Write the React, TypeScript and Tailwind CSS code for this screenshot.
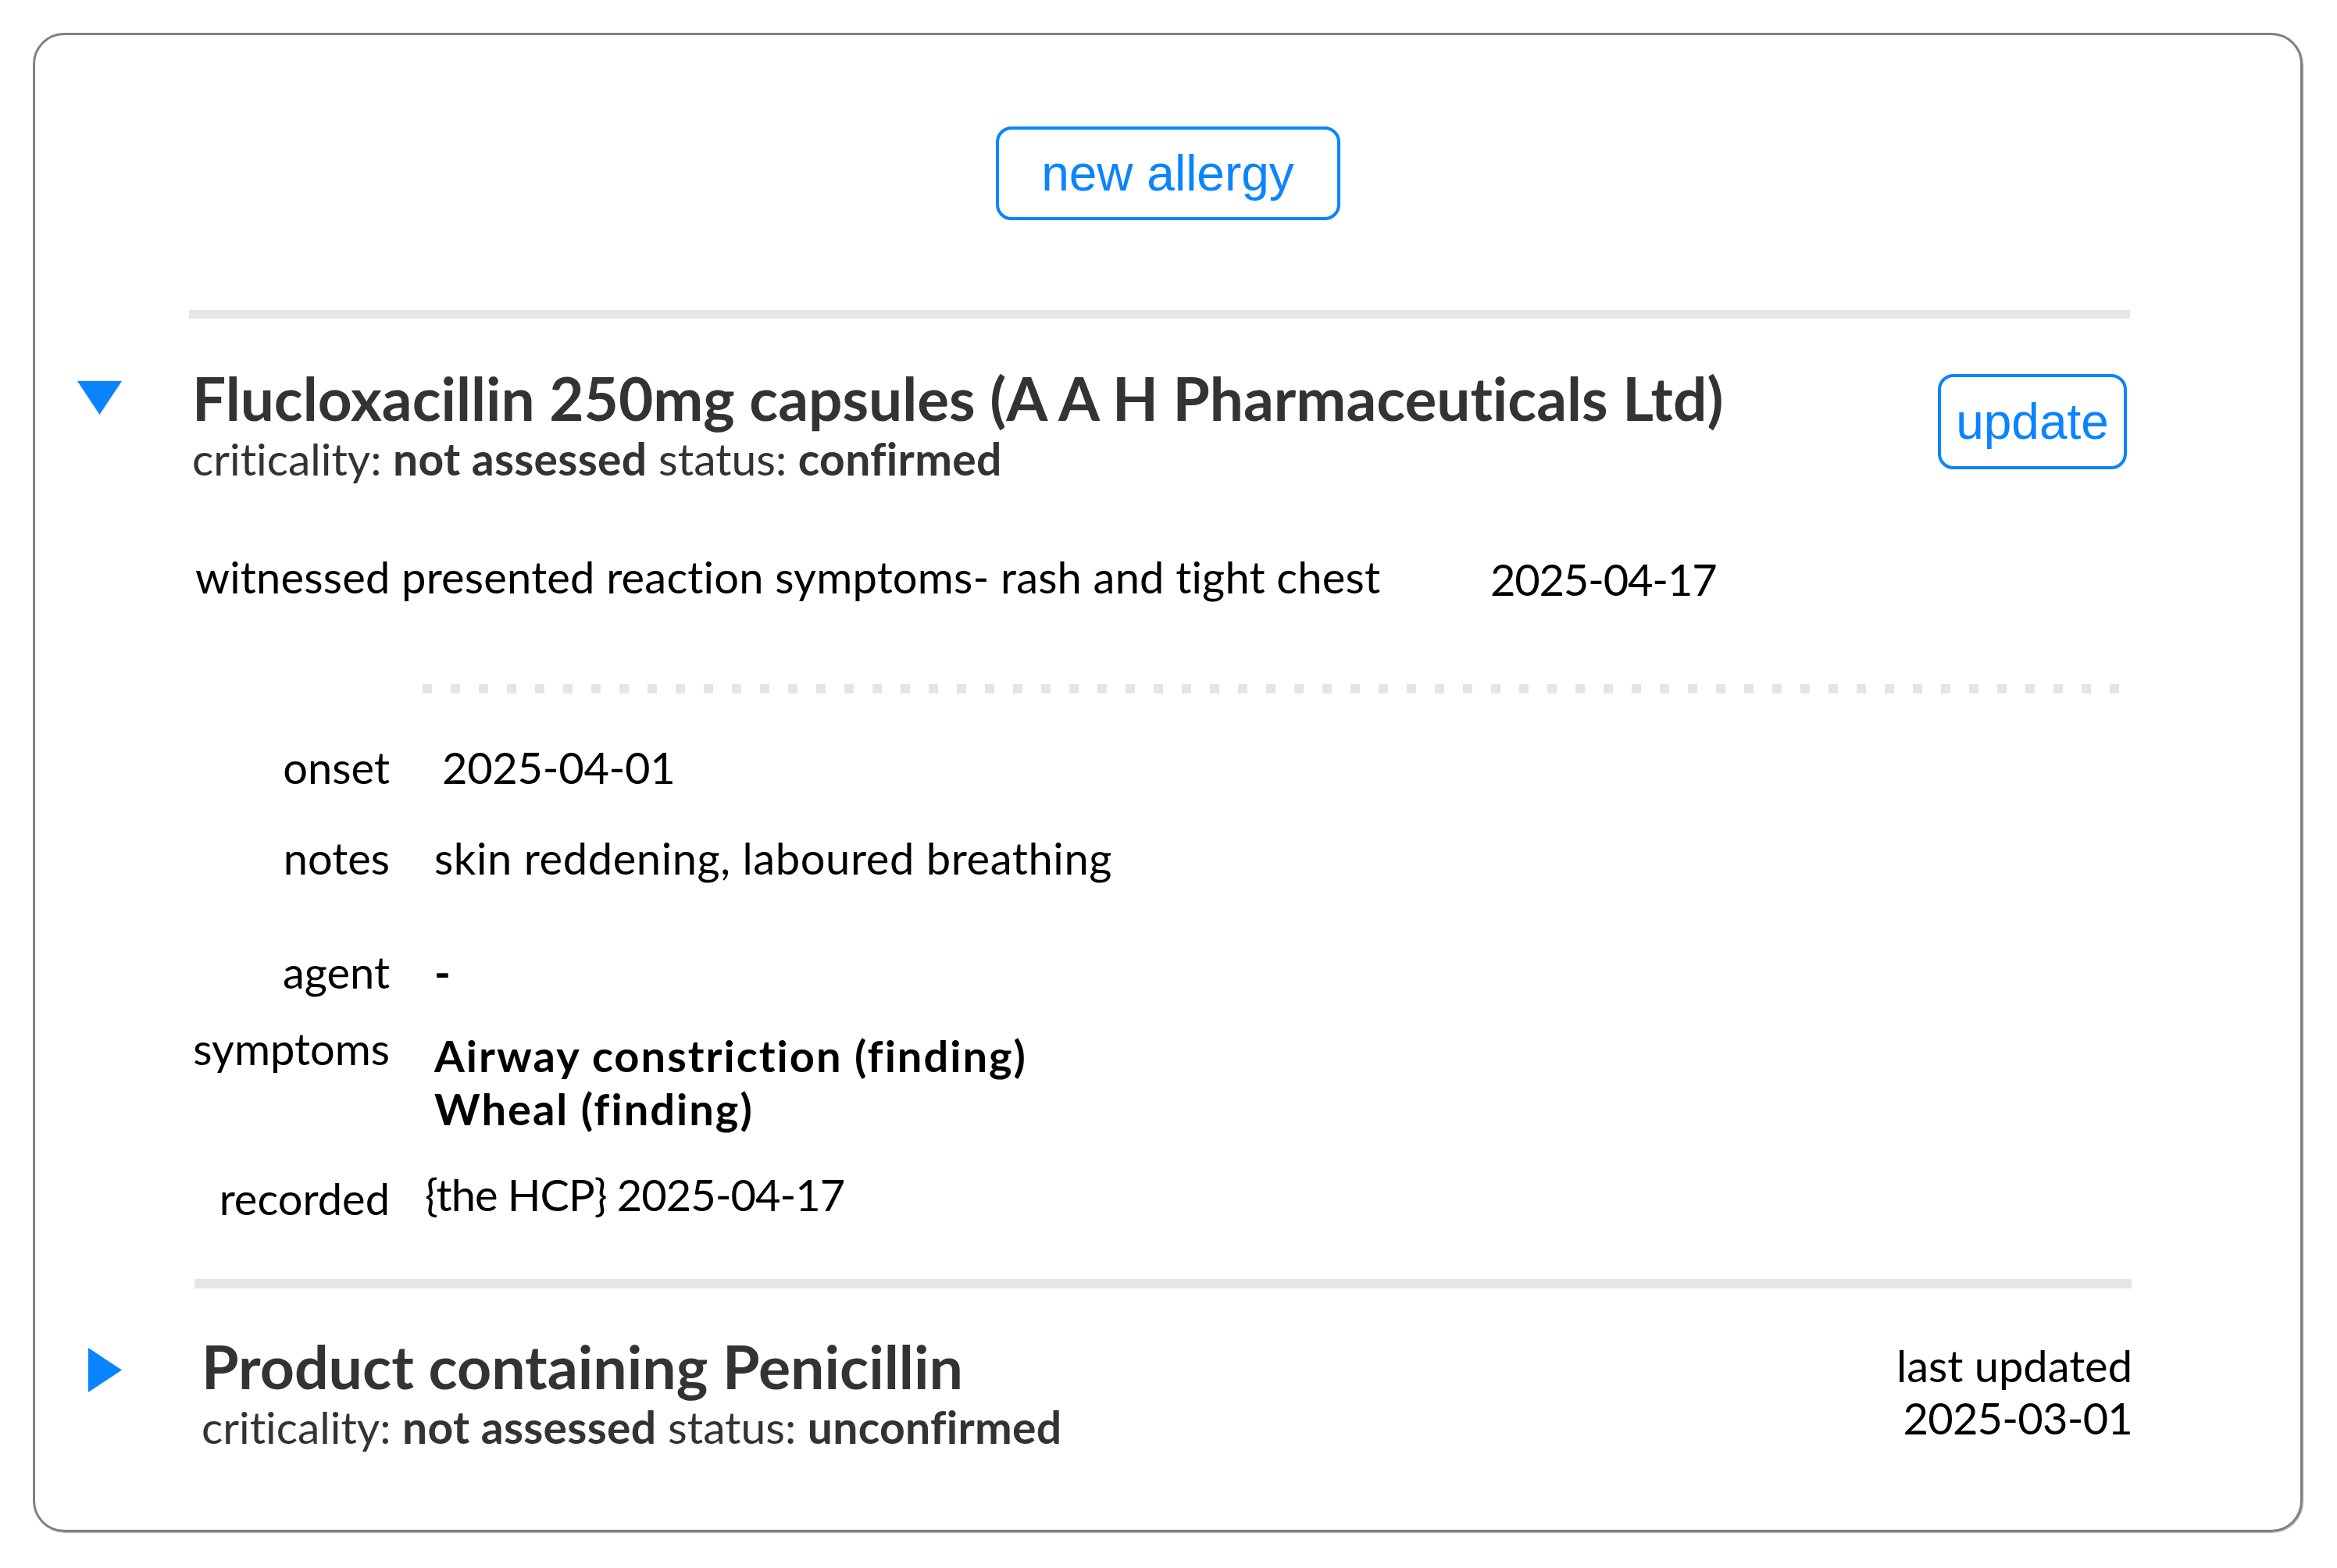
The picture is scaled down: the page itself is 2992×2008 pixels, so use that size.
import React from "react";

const BLUE = "#0a84ff";

const TriangleDown = () => (
  <svg width="57" height="43" viewBox="0 0 57 43" className="shrink-0 mt-[17px]">
    <polygon points="0,0 57,0 28.5,43" fill={BLUE} />
  </svg>
);

const TriangleRight = () => (
  <svg width="43" height="57" viewBox="0 0 43 57" className="shrink-0 mt-[15px] ml-[14px]">
    <polygon points="0,0 43,28.5 0,57" fill={BLUE} />
  </svg>
);

const Status = ({ criticality, status }: { criticality: string; status: string }) => (
  <p className="mt-[11px] text-[57px] leading-none text-[#333]">
    criticality: <b className="font-bold tracking-[0.3px]">{criticality}</b> status:{" "}
    <b className="font-bold tracking-[0.3px]">{status}</b>
  </p>
);

const App = () => {
  return (
    <div className="min-h-screen bg-white pt-[42px] pl-[42px] font-['Segoe_UI','Lato',sans-serif] [font-variant-ligatures:none]">
      <div className="w-[2906px] h-[1920px] rounded-[40px] border-[3px] border-[#808080] shadow-[1px_1px_1px_rgba(0,0,0,0.35)]">
        <div className="flex justify-center pt-[117px]">
          <button className="h-[120px] w-[441px] rounded-[20px] border-4 border-[#0a84ff] font-['Liberation_Sans',Arial,sans-serif] text-[64px] leading-none text-[#0a84ff]">
            new allergy
          </button>
        </div>

        <div className="pl-[54px] pr-[218px]">
          <div className="mt-[115px] ml-[143px] h-[11px] bg-[#e5e5e5]" />

          {/* expanded allergy */}
          <div className="mt-[63px] flex">
            <TriangleDown />
            <div className="ml-[90px] flex-1">
              <div className="flex justify-between items-start">
                <div>
                  <h2 className="text-[76.5px] leading-none font-bold text-[#333]">
                    Flucloxacillin 250mg capsules (A A H Pharmaceuticals Ltd)
                  </h2>
                  <Status criticality="not assessed" status="confirmed" />
                </div>
                <button className="mt-[8px] mr-[4px] h-[122px] w-[242px] rounded-[20px] border-4 border-[#0a84ff] font-['Liberation_Sans',Arial,sans-serif] text-[64px] leading-none text-[#0a84ff]">
                  update
                </button>
              </div>

              <div className="mt-[95px] flex text-[56px] leading-none text-black">
                <p className="ml-[4px] w-[1658px] tracking-[0.2px]">
                  witnessed presented reaction symptoms- rash and tight chest
                </p>
                <p className="pt-[3px] tracking-[-1.2px]">2025-04-17</p>
              </div>

              <div className="mt-[106px] ml-[295px] w-[2172px] h-[12px] bg-[repeating-linear-gradient(to_right,#e5e5e5_0px,#e5e5e5_12px,transparent_12px,transparent_36px)]" />

              <div className="mt-[67px] grid grid-cols-[253px_1fr] gap-x-[57px] text-[56px] leading-none text-black">
                <p className="text-right">onset</p>
                <p className="pl-[10px] tracking-[-0.3px]">2025-04-01</p>

                <p className="mt-[60px] text-right">notes</p>
                <p className="mt-[60px] tracking-[0.6px]">skin reddening, laboured breathing</p>

                <p className="mt-[90px] text-right">agent</p>
                <p className="mt-[90px] font-bold">-</p>

                <p className="mt-[42px] text-right">symptoms</p>
                <div className="mt-[45px] leading-[68px] font-bold tracking-[2px]">
                  <p>Airway constriction (finding)</p>
                  <p>Wheal (finding)</p>
                </div>

                <p className="mt-[53px] text-right">recorded</p>
                <p className="mt-[48px] -ml-[12px] tracking-[-1px]">{"{the HCP}"} 2025-04-17</p>
              </div>
            </div>
          </div>

          <div className="mt-[75px] ml-[150px] w-[2480px] h-[12px] bg-[#e5e5e5]" />

          {/* collapsed allergy */}
          <div className="mt-[61px] flex">
            <TriangleRight />
            <div className="ml-[102px] flex-1 flex justify-between items-start">
              <div>
                <h2 className="text-[77px] leading-none font-bold text-[#333]">
                  Product containing Penicillin
                </h2>
                <Status criticality="not assessed" status="unconfirmed" />
              </div>
              <div className="mt-[4px] -mr-[3px] text-right text-[56px] leading-[67px] text-black">
                <p>last updated</p>
                <p className="tracking-[-0.8px]">2025-03-01</p>
              </div>
            </div>
          </div>
        </div>
      </div>
    </div>
  );
};

export default App;
